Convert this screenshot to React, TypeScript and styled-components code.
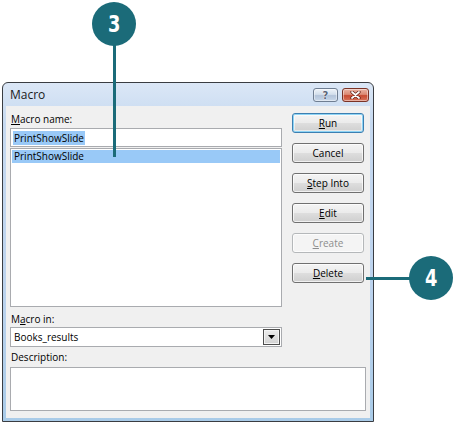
import { FC } from 'react';
import styled, { createGlobalStyle } from 'styled-components';

const TEAL = '#1b6b79';
const UI_FONT = '"Open Sans", "Noto Sans", "Liberation Sans", sans-serif';

const GlobalStyle = createGlobalStyle`
  html, body {
    margin: 0;
    padding: 0;
    background: #ffffff;
  }
`;

const Page = styled.div`
  position: relative;
  width: 455px;
  height: 423px;
  padding: 82px 0 0 2px;
  box-sizing: border-box;
  background: #ffffff;
  font-family: ${UI_FONT};
  font-size: 10px;
  color: #000;
  overflow: hidden;
`;

const Window = styled.div`
  width: 372px;
  height: 340px;
  box-sizing: border-box;
  border: 1px solid #3a3d42;
  border-radius: 6px 6px 0 0;
  background: linear-gradient(to bottom, #dbe7f6 0%, #c6d9f0 12%, #bcd3ee 60%, #a9cbe8 100%);
  padding: 0 3px 3px 3px;
  display: flex;
  flex-direction: column;
`;

const TitleBar = styled.div`
  height: 23px;
  display: flex;
  justify-content: space-between;
  align-items: flex-start;
  padding: 0 1px 0 4px;
`;

const Title = styled.div`
  font-size: 12px;
  line-height: 23px;
  color: #1a1a1a;
`;

const TitleButtons = styled.div`
  display: flex;
  gap: 4px;
  margin-top: 5px;
`;

const CaptionButton = styled.div<{ $close?: boolean }>`
  width: ${({ $close }) => ($close ? 27 : 25)}px;
  height: 14px;
  box-sizing: border-box;
  border: 1px solid ${({ $close }) => ($close ? '#7b3326' : '#6f7e92')};
  border-radius: 3px;
  background: ${({ $close }) =>
    $close
      ? 'linear-gradient(to bottom, #eab3a4 0%, #dc8a74 45%, #c84b32 55%, #d8735a 100%)'
      : 'linear-gradient(to bottom, #eef3f9 0%, #d3dfec 45%, #b3c4da 55%, #c9d8ea 100%)'};
  box-shadow: inset 0 0 0 1px rgba(255, 255, 255, 0.45);
  display: flex;
  align-items: center;
  justify-content: center;
  font-family: "DejaVu Sans", sans-serif;
  font-size: 10px;
  font-weight: bold;
  color: #5a6678;
  text-shadow: 0 0 1px #fff, 0 0 1px #fff;
`;

const Client = styled.div`
  flex: 1;
  background: #f0f0f0;
  padding: 6px 4px 7px 4px;
  display: flex;
  flex-direction: column;
`;

const TopRow = styled.div`
  display: flex;
  gap: 10px;
`;

const LeftColumn = styled.div`
  width: 272px;
  display: flex;
  flex-direction: column;
`;

const RightColumn = styled.div`
  width: 72px;
  padding-top: 1px;
  display: flex;
  flex-direction: column;
  gap: 10px;
`;

const Label = styled.div<{ $top?: number; $height?: number }>`
  height: ${({ $height }) => $height ?? 15}px;
  line-height: ${({ $height }) => $height ?? 15}px;
  margin-top: ${({ $top }) => $top ?? 0}px;
  padding-left: 1px;
  white-space: nowrap;
`;

const Field = styled.div<{ $height: number; $top?: number }>`
  height: ${({ $height }) => $height}px;
  margin-top: ${({ $top }) => $top ?? 0}px;
  box-sizing: border-box;
  border: 1px solid #a9abaf;
  background: #ffffff;
`;

const NameInput = styled(Field)`
  display: flex;
  align-items: center;
  padding-left: 2px;
`;

const Selected = styled.span`
  background: #99c9f7;
  line-height: 14px;
  padding: 0 1px;
`;

const ListBox = styled(Field)`
  padding: 1px;
`;

const ListRow = styled.div<{ $selected?: boolean }>`
  height: 13px;
  line-height: 13px;
  padding-left: 2px;
  background: ${({ $selected }) => ($selected ? '#99c9f7' : 'transparent')};
`;

const Combo = styled(Field)`
  display: flex;
  align-items: center;
  justify-content: space-between;
  padding: 0 1px 0 3px;
`;

const ComboArrow = styled.div`
  width: 17px;
  height: 16px;
  box-sizing: border-box;
  border: 1px solid #4d4d4d;
  box-shadow: inset 0 0 0 1px #f4f4f4;
  background: linear-gradient(to bottom, #ececec, #d2d2d2);
  display: flex;
  align-items: center;
  justify-content: center;
`;

const Button = styled.div<{ $default?: boolean; $disabled?: boolean }>`
  height: 20px;
  box-sizing: border-box;
  border: 1px solid ${({ $default, $disabled }) => ($disabled ? '#b5b8ba' : $default ? '#3c7fb1' : '#707070')};
  border-radius: 3px;
  background: ${({ $disabled }) =>
    $disabled
      ? '#f4f4f4'
      : 'linear-gradient(to bottom, #f4f4f4 0%, #ebebeb 48%, #dddddd 52%, #cfcfcf 100%)'};
  box-shadow: ${({ $default }) =>
    $default ? 'inset 0 0 0 1px #8ed4f5, inset 0 0 0 2px rgba(255,255,255,0.5)' : 'inset 0 0 0 1px rgba(255,255,255,0.7)'};
  color: ${({ $disabled }) => ($disabled ? '#8d8d8d' : '#000')};
  display: flex;
  align-items: center;
  justify-content: center;
  line-height: 18px;
`;

const Description = styled(Field)``;

const Callout = styled.div<{ $left: number; $top: number }>`
  position: absolute;
  left: ${({ $left }) => $left}px;
  top: ${({ $top }) => $top}px;
  width: 44px;
  height: 44px;
  border-radius: 50%;
  background: ${TEAL};
  display: flex;
  align-items: center;
  justify-content: center;
`;

const CalloutNumber = styled.span`
  color: #ffffff;
  font-family: "DejaVu Sans Condensed", "DejaVu Sans", sans-serif;
  font-weight: bold;
  font-size: 23px;
  line-height: 1;
  transform: scaleX(0.86);
`;

const Leader = styled.div<{ $left: number; $top: number; $w: number; $h: number }>`
  position: absolute;
  left: ${({ $left }) => $left}px;
  top: ${({ $top }) => $top}px;
  width: ${({ $w }) => $w}px;
  height: ${({ $h }) => $h}px;
  background: ${TEAL};
`;

const buttons: { key: string; rest: string; isDefault?: boolean; disabled?: boolean }[] = [
  { key: 'R', rest: 'un', isDefault: true },
  { key: '', rest: 'Cancel' },
  { key: 'S', rest: 'tep Into' },
  { key: 'E', rest: 'dit' },
  { key: 'C', rest: 'reate', disabled: true },
  { key: 'D', rest: 'elete' },
];

const App: FC = () => {
  return (
    <Page>
      <GlobalStyle />
      <Window>
        <TitleBar>
          <Title>Macro</Title>
          <TitleButtons>
            <CaptionButton>?</CaptionButton>
            <CaptionButton $close>
              <svg width="11" height="8" viewBox="0 0 11 8">
                <path d="M2 1 L9 7 M9 1 L2 7" stroke="#5a1b10" strokeWidth="3.2" strokeLinecap="round" />
                <path d="M2 1 L9 7 M9 1 L2 7" stroke="#ffffff" strokeWidth="1.8" strokeLinecap="round" />
              </svg>
            </CaptionButton>
          </TitleButtons>
        </TitleBar>
        <Client>
          <TopRow>
            <LeftColumn>
              <Label $height={15}>
                <u>M</u>acro name:
              </Label>
              <NameInput $height={19} $top={1}>
                <Selected>PrintShowSlide</Selected>
              </NameInput>
              <ListBox $height={159} $top={1}>
                <ListRow $selected>PrintShowSlide</ListRow>
              </ListBox>
              <Label $top={5}>
                M<u>a</u>cro in:
              </Label>
              <Combo $height={20}>
                <span>Books_results</span>
                <ComboArrow>
                  <svg width="7" height="4" viewBox="0 0 7 4">
                    <path d="M0 0 H7 L3.5 4 Z" fill="#000" />
                  </svg>
                </ComboArrow>
              </Combo>
            </LeftColumn>
            <RightColumn>
              {buttons.map((b) => (
                <Button key={b.rest} $default={b.isDefault} $disabled={b.disabled}>
                  <span>
                    {b.key && <u>{b.key}</u>}
                    {b.rest}
                  </span>
                </Button>
              ))}
            </RightColumn>
          </TopRow>
          <Label $top={3} $height={14}>
            Description:
          </Label>
          <Description $height={44} $top={3} />
        </Client>
      </Window>

      <Leader $left={113} $top={40} $w={3} $h={117} />
      <Callout $left={92} $top={2}>
        <CalloutNumber>3</CalloutNumber>
      </Callout>
      <Leader $left={366} $top={277} $w={46} $h={3} />
      <Callout $left={409} $top={256}>
        <CalloutNumber>4</CalloutNumber>
      </Callout>
    </Page>
  );
};

export default App;
